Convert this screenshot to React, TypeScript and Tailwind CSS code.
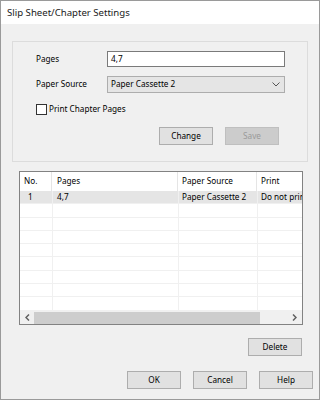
import React from 'react';

const font = "font-['Noto_Sans',sans-serif]";

function Btn({ label, disabled }: { label: string; disabled?: boolean }) {
  return (
    <div
      className={
        'w-[54px] h-[18px] flex items-center justify-center border text-[8.2px] ' +
        (disabled
          ? 'bg-[#cccccc] border-[#bfbfbf] text-[#9a9a9a]'
          : 'bg-[#e1e1e1] border-[#adadad] text-black')
      }
    >
      {label}
    </div>
  );
}

const rows = Array.from({ length: 9 });

export default function App() {
  return (
    <div className={`w-[320px] h-[400px] border border-[#9a9a9a] bg-[#f0f0f0] flex flex-col ${font} text-[8.2px] text-black leading-none`}>
      {/* title bar */}
      <div className="h-[23px] bg-white flex items-center pl-[6px] text-[9.6px] text-[#1a1a1a]">
        Slip Sheet/Chapter Settings
      </div>

      {/* group box */}
      <div className="mt-[17px] ml-[11px] w-[296px] border border-[#dcdcdc] pt-[9px] pb-[16px] flex flex-col">
        <div className="flex items-center">
          <span className="w-[94px] pl-[23px]">Pages</span>
          <div className="w-[178px] h-[16px] bg-white border border-[#7a7a7a] flex items-center pl-[3px]">
            4,7
          </div>
        </div>
        <div className="mt-[9px] flex items-center">
          <span className="w-[94px] pl-[23px]">Paper Source</span>
          <div className="w-[178px] h-[17px] bg-[#e5e5e5] border border-[#adadad] flex items-center justify-between pl-[3px] pr-[4px]">
            <span>Paper Cassette 2</span>
            <svg width="8" height="5" viewBox="0 0 8 5">
              <path d="M0.5 0.5 L4 4 L7.5 0.5" fill="none" stroke="#555" strokeWidth="1" />
            </svg>
          </div>
        </div>
        <div className="mt-[11px] ml-[23px] flex items-center">
          <div className="w-[11px] h-[11px] border border-[#333] bg-white" />
          <span className="ml-[2px]">Print Chapter Pages</span>
        </div>
        <div className="mt-[12px] flex justify-end gap-[12px] pr-[28px]">
          <Btn label="Change" />
          <Btn label="Save" disabled />
        </div>
      </div>

      {/* list view */}
      <div className="mt-[9px] ml-[18px] w-[284px] h-[154px] border border-[#828282] bg-white flex flex-col overflow-hidden">
        <div className="h-[19px] flex items-center shrink-0">
          <div className="w-[32px] h-full flex items-center pl-[4px] border-r border-[#e5e5e5]">No.</div>
          <div className="w-[126px] h-full flex items-center pl-[5px] border-r border-[#e5e5e5]">Pages</div>
          <div className="w-[79px] h-full flex items-center pl-[4px] border-r border-[#e5e5e5]">Paper Source</div>
          <div className="flex-1 h-full flex items-center pl-[4px]">Print</div>
        </div>
        <div className="flex-1 flex flex-col overflow-hidden">
          {rows.map((_, i) => (
            <div
              key={i}
              className={
                'h-[13.3px] shrink-0 flex border-b border-[#f0f0f0] ' + (i === 0 ? 'bg-[#e5e5e5]' : '')
              }
            >
              <div className="w-[33px] flex items-center pl-[8px] border-r border-[#f0f0f0]">{i === 0 ? '1' : ''}</div>
              <div className="w-[126px] flex items-center pl-[4px] border-r border-[#f0f0f0]">{i === 0 ? '4,7' : ''}</div>
              <div className="w-[79px] flex items-center pl-[3px] border-r border-[#f0f0f0]">{i === 0 ? 'Paper Cassette 2' : ''}</div>
              <div className="flex-1 flex items-center pl-[3px] whitespace-nowrap overflow-hidden">{i === 0 ? 'Do not print' : ''}</div>
            </div>
          ))}
          <div className="flex-1 flex">
            <div className="w-[33px] border-r border-[#f0f0f0]" />
            <div className="w-[126px] border-r border-[#f0f0f0]" />
            <div className="w-[79px] border-r border-[#f0f0f0]" />
          </div>
        </div>
        {/* horizontal scrollbar */}
        <div className="h-[13px] shrink-0 bg-[#f0f0f0] flex items-center">
          <div className="w-[14px] flex justify-center">
            <svg width="5" height="7" viewBox="0 0 5 7">
              <path d="M4 0.5 L1 3.5 L4 6.5" fill="none" stroke="#606060" strokeWidth="1.5" />
            </svg>
          </div>
          <div className="w-[226px] h-[12px] bg-[#cdcdcd]" />
          <div className="flex-1 flex justify-end pr-[5px]">
            <svg width="5" height="7" viewBox="0 0 5 7">
              <path d="M1 0.5 L4 3.5 L1 6.5" fill="none" stroke="#606060" strokeWidth="1.5" />
            </svg>
          </div>
        </div>
      </div>

      <div className="mt-[13px] flex justify-end pr-[17px]">
        <Btn label="Delete" />
      </div>
      <div className="mt-[15px] flex justify-end gap-[12px] pr-[6px]">
        <Btn label="OK" />
        <Btn label="Cancel" />
        <Btn label="Help" />
      </div>
    </div>
  );
}
